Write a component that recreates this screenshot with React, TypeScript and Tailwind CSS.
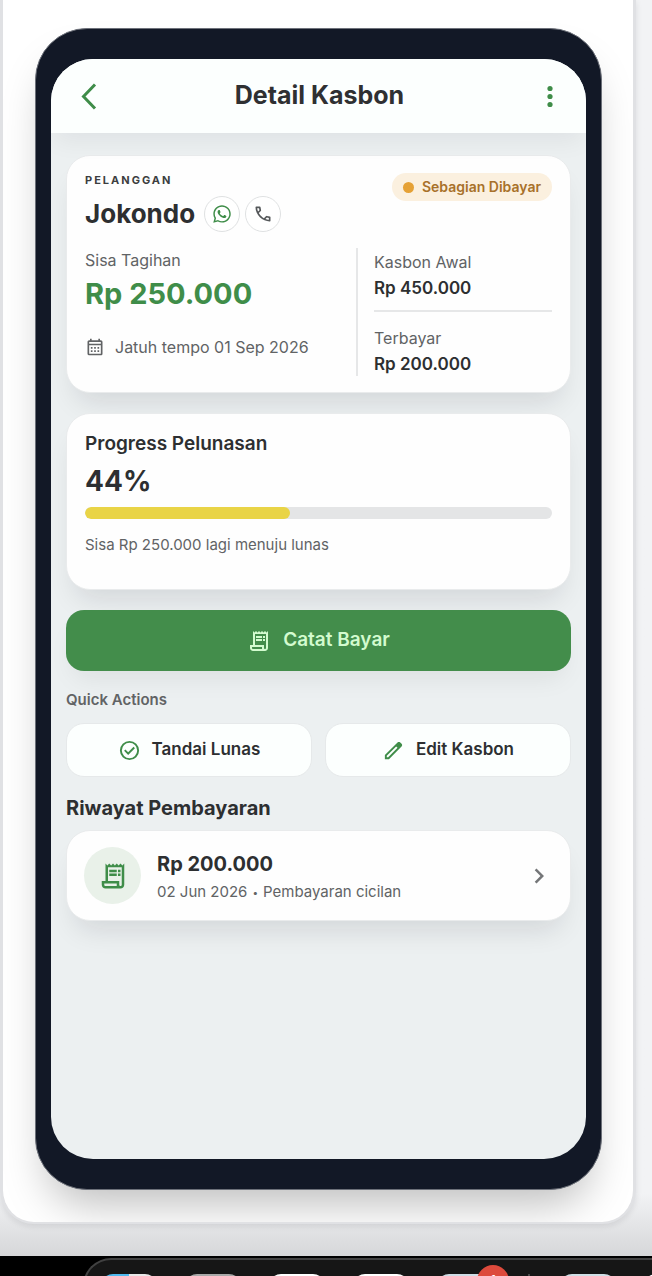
import type { ReactNode } from 'react'
import clsx from 'clsx'
import { FaWhatsapp } from 'react-icons/fa'
import { MdChevronRight, MdOutlineCalendarMonth, MdOutlineReceiptLong } from 'react-icons/md'

const DOCK_APPS = [
  'bg-gradient-to-r from-[#4fb9ee] from-50% to-[#e8e8e8] to-50%',
  'bg-[#a9a9a9]',
  'bg-white',
  'bg-white',
  'bg-[#cfdde6]',
]

// Material Symbols outlines, drawn on their 960 unit grid
const SYMBOLS = {
  call: 'M798-120q-125 0-247-54.5T329-329Q229-429 174.5-551T120-798q0-18 12-30t30-12h162q14 0 25 9.5t13 22.5l26 140q2 16-1 27t-11 19l-97 98q20 37 47.5 71.5T387-386q31 31 65 57.5t72 48.5l94-94q9-9 23.5-13.5T670-390l138 28q14 4 23 14.5t9 23.5v162q0 18-12 30t-30 12ZM241-600l66-66-17-94h-89q5 41 14 81t26 79Zm358 358q39 17 79.5 27t81.5 13v-88l-94-19-67 67Z',
  edit: 'M200-200h57l391-391-57-57-391 391v57Zm-80 80v-170l528-527q12-11 26.5-17t30.5-6q16 0 31 6t26 18l55 56q12 11 17.5 26t5.5 30q0 16-5.5 30.5T817-647L290-120H120Z',
  check: 'm424-296 282-282-56-56-226 226-114-114-56 56 170 170ZM480-80A400 400 0 1 1 480-880 400 400 0 1 1 480-80Zm0-80A320 320 0 1 0 480-800 320 320 0 1 0 480-160Z',
}

function Symbol({ name, size }: { name: keyof typeof SYMBOLS; size: number }) {
  return (
    <svg width={size} height={size} viewBox="0 -960 960 960" fill="currentColor" aria-hidden="true">
      <path d={SYMBOLS[name]} />
    </svg>
  )
}

function Card({ children, className }: { children: ReactNode; className?: string }) {
  return (
    <section
      className={clsx(
        'rounded-3xl border border-[#e9ebec] bg-[#fefefe] shadow-[0_18px_28px_-10px_rgba(20,20,30,0.12)]',
        className,
      )}
    >
      {children}
    </section>
  )
}

function RoundButton({ label, children }: { label: string; children: ReactNode }) {
  return (
    <button
      type="button"
      aria-label={label}
      className="flex size-9 items-center justify-center rounded-full border border-[#dfe1e2] bg-white"
    >
      {children}
    </button>
  )
}

function QuickAction({ icon, label }: { icon: ReactNode; label: string }) {
  return (
    <button
      type="button"
      className="flex h-[54px] items-center justify-center gap-[11px] rounded-[18px] border border-[#e6e9ea] bg-[#fcfffe] text-[17px] font-semibold text-[#2d2f31]"
    >
      <span className="text-[#3f8d49]">{icon}</span>
      {label}
    </button>
  )
}

function Header() {
  return (
    <header className="relative z-10 flex h-[74px] items-center justify-between bg-[#fcfffe] px-6 shadow-[0_12px_24px_-4px_rgba(20,20,30,0.06)]">
      <button type="button" aria-label="Kembali" className="text-[#3f8d49]">
        <svg width="26" height="28" viewBox="0 0 26 28" fill="none" stroke="currentColor" strokeWidth="3">
          <path d="M20 2.5 8.5 14.5 20 26.5" />
        </svg>
      </button>
      <h1 className="text-[25px] font-bold text-[#2f3032]">Detail Kasbon</h1>
      <button type="button" aria-label="Menu" className="text-[#3f8d49]">
        <svg width="24" height="28" viewBox="0 0 24 28" fill="currentColor">
          <circle cx="12" cy="6.5" r="2.6" />
          <circle cx="12" cy="14.5" r="2.6" />
          <circle cx="12" cy="22.5" r="2.6" />
        </svg>
      </button>
    </header>
  )
}

function CustomerCard() {
  return (
    <Card className="px-[18px] pt-4 pb-4">
      <div className="flex items-start justify-between">
        <div>
          <p className="text-[11px] leading-4 font-bold tracking-[2px] text-[#3c3e40]">PELANGGAN</p>
          <div className="mt-2 flex items-center gap-[5px]">
            <h2 className="mr-1 text-[26px] leading-9 font-bold text-[#2d2f31]">Jokondo</h2>
            <RoundButton label="WhatsApp">
              <FaWhatsapp size={20} className="text-[#3f8d49]" />
            </RoundButton>
            <RoundButton label="Telepon">
              <span className="text-[#55585a]">
                <Symbol name="call" size={20} />
              </span>
            </RoundButton>
          </div>
        </div>
        <span className="mt-px flex h-7 items-center gap-2 rounded-full bg-[#fbf0df] px-[11px] text-sm font-semibold text-[#a8712a]">
          <span className="size-[11px] rounded-full bg-[#e5a136]" />
          Sebagian Dibayar
        </span>
      </div>

      <div className="mt-4 flex">
        <div className="flex-1">
          <p className="text-base leading-6 text-[#616365]">Sisa Tagihan</p>
          <p className="text-[29px] leading-[44px] font-bold text-[#3f8d49]">Rp 250.000</p>
          <p className="mt-[19px] flex items-center gap-[10px] text-base text-[#616365]">
            <MdOutlineCalendarMonth size={20} />
            Jatuh tempo 01 Sep 2026
          </p>
        </div>
        <dl className="w-[196px] border-l-2 border-[#e6e7e8] pt-1 pl-4">
          <div className="border-b-2 border-[#e6e7e8] pb-[10px]">
            <dt className="text-base leading-5 text-[#616365]">Kasbon Awal</dt>
            <dd className="mt-1 text-[17px] leading-6 font-semibold text-[#2d2f31]">Rp 450.000</dd>
          </div>
          <div className="pt-4">
            <dt className="text-base leading-5 text-[#616365]">Terbayar</dt>
            <dd className="mt-1 text-[17px] leading-6 font-semibold text-[#2d2f31]">Rp 200.000</dd>
          </div>
        </dl>
      </div>
    </Card>
  )
}

function ProgressCard({ percent }: { percent: number }) {
  return (
    <Card className="mt-5 px-[18px] pt-4 pb-[34px]">
      <h3 className="text-[19px] leading-7 font-semibold text-[#2d2f31]">Progress Pelunasan</h3>
      <p className="mt-[3px] text-[28px] leading-10 font-bold text-[#2d2f31]">{percent}%</p>
      <div
        role="progressbar"
        aria-label="Progress Pelunasan"
        aria-valuenow={percent}
        aria-valuemin={0}
        aria-valuemax={100}
        className="mt-1.5 h-3 overflow-hidden rounded-full bg-[#e4e5e6]"
      >
        <div className="h-full rounded-full bg-[#e9d446]" style={{ width: `${percent}%` }} />
      </div>
      <p className="mt-4 text-[15px] leading-5 text-[#616365]">Sisa Rp 250.000 lagi menuju lunas</p>
    </Card>
  )
}

function Dock() {
  return (
    <footer className="h-5 overflow-hidden bg-black pt-0.5 pl-[83px]">
      <div className="flex h-20 gap-7 rounded-tl-[28px] border-t-2 border-l-2 border-[#414141] bg-[#161616] pt-3.5 pl-4">
        {DOCK_APPS.map((color, i) => (
          <div key={i} className={clsx('relative size-14 shrink-0 rounded-xl', color)}>
            {i === 4 && (
              <span className="absolute -top-[9px] -right-4 flex size-8 items-center justify-center rounded-full bg-[#dd4a3c] text-base text-white">
                1
              </span>
            )}
          </div>
        ))}
        <div className="mr-0.5 ml-[7px] h-14 w-0.5 shrink-0 bg-[#4a4a4a]" />
        <div className="size-14 shrink-0 rounded-xl bg-[#cfdfe6]" />
        <div className="size-14 shrink-0 rounded-xl bg-white" />
      </div>
    </footer>
  )
}

export default function App() {
  return (
    <div className="flex min-h-screen flex-col overflow-hidden bg-[#f2f3f5] font-['Inter',sans-serif]">
      <div className="flex flex-1 flex-col bg-gradient-to-b from-[#f2f3f5] from-95% to-[#d6d7d9] pr-4 pb-8">
        <div className="flex flex-1 flex-col overflow-hidden rounded-b-[34px] border-x-[3px] border-b-2 border-[#e0e1e4] bg-white pt-7 pr-[31px] pb-8 pl-8 shadow-[0_2px_6px_rgba(20,20,30,0.1)]">
          <div className="flex flex-1 flex-col rounded-[52px] border border-[#6c7079] bg-[#121826] px-[15px] py-[30px] shadow-[0_26px_44px_-12px_rgba(0,0,0,0.26)]">
            <div className="flex flex-1 flex-col overflow-hidden rounded-[42px] bg-[#ecf0f1]">
              <Header />
              <main className="flex flex-col px-[15px] pt-[22px] pb-10">
                <CustomerCard />
                <ProgressCard percent={44} />

                <button
                  type="button"
                  className="mt-5 flex h-[61px] items-center justify-center gap-3 rounded-[18px] bg-[#438d4b] text-[19px] font-semibold text-[#d3fbcf] shadow-[0_14px_26px_-8px_rgba(20,20,30,0.08)]"
                >
                  <MdOutlineReceiptLong size={24} />
                  Catat Bayar
                </button>

                <h3 className="mt-[17px] text-[15px] leading-6 font-semibold text-[#616365]">Quick Actions</h3>
                <div className="mt-[11px] grid grid-cols-2 gap-[13px]">
                  <QuickAction icon={<Symbol name="check" size={23} />} label="Tandai Lunas" />
                  <QuickAction icon={<Symbol name="edit" size={23} />} label="Edit Kasbon" />
                </div>

                <h3 className="mt-[17px] text-xl leading-7 font-bold text-[#2d2f31]">Riwayat Pembayaran</h3>
                <Card className="mt-2">
                  <a href="#riwayat" className="flex items-center py-4 pr-4 pl-[17px]">
                    <span className="flex size-[57px] items-center justify-center rounded-full bg-[#e9f1e9] text-[#3f8d49]">
                      <MdOutlineReceiptLong size={30} />
                    </span>
                    <span className="ml-4 flex flex-1 flex-col gap-1">
                      <span className="text-xl leading-7 font-bold text-[#2d2f31]">Rp 200.000</span>
                      <span className="flex items-center gap-[5px] text-[15px] leading-5 text-[#616365]">
                        02 Jun 2026 <span className="text-[10px]">•</span> Pembayaran cicilan
                      </span>
                    </span>
                    <MdChevronRight size={30} className="text-[#747678]" />
                  </a>
                </Card>
              </main>
            </div>
          </div>
        </div>
      </div>
      <Dock />
    </div>
  )
}
